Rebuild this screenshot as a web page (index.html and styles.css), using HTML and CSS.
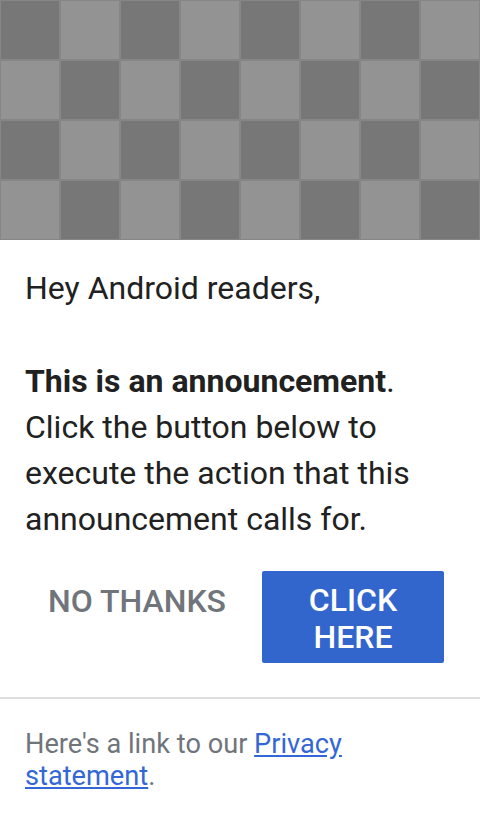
FILE: index.html
```html
<!DOCTYPE html>
<html>
<head>
<meta charset="utf-8">
<link rel="stylesheet" href="styles.css">
</head>
<body>
<div class="card">
  <div class="hero">
    <div class="sq d"></div><div class="sq l"></div><div class="sq d"></div><div class="sq l"></div><div class="sq d"></div><div class="sq l"></div><div class="sq d"></div><div class="sq l"></div>
    <div class="sq l"></div><div class="sq d"></div><div class="sq l"></div><div class="sq d"></div><div class="sq l"></div><div class="sq d"></div><div class="sq l"></div><div class="sq d"></div>
    <div class="sq d"></div><div class="sq l"></div><div class="sq d"></div><div class="sq l"></div><div class="sq d"></div><div class="sq l"></div><div class="sq d"></div><div class="sq l"></div>
    <div class="sq l"></div><div class="sq d"></div><div class="sq l"></div><div class="sq d"></div><div class="sq l"></div><div class="sq d"></div><div class="sq l"></div><div class="sq d"></div>
  </div>
  <div class="body">
    <p class="msg">Hey Android readers,<br><br><b>This is an announcement</b>. Click the button below to execute the action that this announcement calls for.</p>
    <div class="actions">
      <button class="btn-text">NO THANKS</button>
      <button class="btn-primary">CLICK<br>HERE</button>
    </div>
  </div>
  <div class="footer">
    <p class="legal">Here's a link to our <a href="#">Privacy statement</a>.</p>
  </div>
</div>
</body>
</html>
```
FILE: styles.css
```css
html, body {
  margin: 0;
  padding: 0;
  background: #fff;
  font-family: Roboto, "Noto Sans", sans-serif;
}
.card {
  width: 480px;
}
.hero {
  display: grid;
  grid-template-columns: repeat(8, 60px);
  grid-template-rows: repeat(4, 60px);
  height: 240px;
  background: #858585;
}
.sq {
  box-sizing: border-box;
  border: 1px solid #868686;
}
.sq.d { background: #777777; }
.sq.l { background: #939393; }
.body {
  padding: 25px 36px 0 25px;
}
.msg {
  margin: 0;
  font-size: 32px;
  line-height: 46.3px;
  color: #212121;
}
.msg b { font-weight: 700; }
.actions {
  display: flex;
  justify-content: flex-end;
  align-items: flex-start;
  gap: 36px;
  margin-top: 28px;
  padding-bottom: 34px;
}
button {
  font-family: Roboto, "Noto Sans", sans-serif;
  font-size: 32px;
  font-weight: 500;
  border: 0;
  cursor: pointer;
}
.btn-text {
  background: none;
  color: #70747b;
  padding: 12px 0 0;
  line-height: 37px;
}
.btn-primary {
  background: #3366cc;
  color: #fff;
  width: 182px;
  padding: 11px 0 7px;
  line-height: 37px;
  border-radius: 2px;
}
.footer {
  border-top: 2px solid #dedede;
  padding: 29px 36px 0 25px;
}
.legal {
  margin: 0;
  font-size: 27.2px;
  line-height: 32px;
  color: #70747b;
}
.legal a {
  color: #3367d6;
  text-decoration: underline;
}
```
